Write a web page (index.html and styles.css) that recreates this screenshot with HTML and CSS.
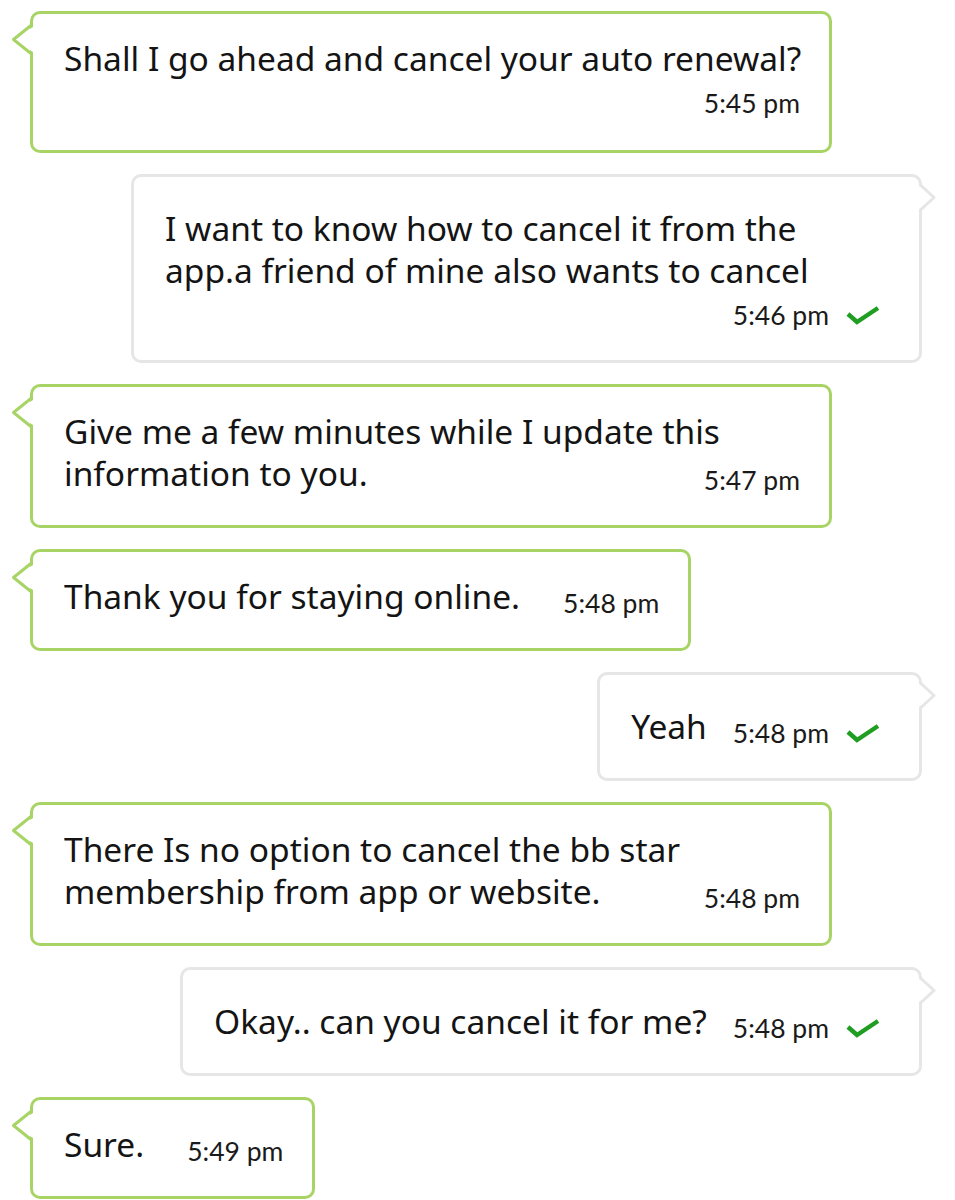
FILE: index.html
```html
<!DOCTYPE html>
<html>
<meta charset="utf-8">
<head>
  <link rel="stylesheet" href="styles.css">
</head>
<body>
  <div class="chat">
    <div class="msg in wide stack">
      <svg class="tail" width="24" height="34"><polygon points="25,2 2.5,16.5 25,31" /><polyline points="20.5,2 2.5,16.5 20.5,31" /></svg>
      <div class="body">Shall I go ahead and cancel your auto renewal?</div>
      <div class="meta"><span class="time">5:45 pm</span></div>
    </div>

    <div class="msg out wide stack">
      <svg class="tail" width="18" height="30"><polygon points="0,2 16,14.5 0,27" /><polyline points="2.5,2 16,14.5 2.5,27" /></svg>
      <div class="body">I want to know how to cancel it from the<br>app.a friend of mine also wants to cancel</div>
      <div class="meta">
        <span class="time">5:46 pm</span>
        <svg class="tick" width="34" height="20"><polyline points="2,9 11,17 32,3" /></svg>
      </div>
    </div>

    <div class="msg in wide">
      <svg class="tail" width="24" height="34"><polygon points="25,2 2.5,16.5 25,31" /><polyline points="20.5,2 2.5,16.5 20.5,31" /></svg>
      <div class="body">Give me a few minutes while I update this<br>information to you.</div>
      <div class="meta"><span class="time">5:47 pm</span></div>
    </div>

    <div class="msg in">
      <svg class="tail" width="24" height="34"><polygon points="25,2 2.5,16.5 25,31" /><polyline points="20.5,2 2.5,16.5 20.5,31" /></svg>
      <div class="body">Thank you for staying online.</div>
      <div class="meta"><span class="time">5:48 pm</span></div>
    </div>

    <div class="msg out">
      <svg class="tail" width="18" height="30"><polygon points="0,2 16,14.5 0,27" /><polyline points="2.5,2 16,14.5 2.5,27" /></svg>
      <div class="body">Yeah</div>
      <div class="meta">
        <span class="time">5:48 pm</span>
        <svg class="tick" width="34" height="20"><polyline points="2,9 11,17 32,3" /></svg>
      </div>
    </div>

    <div class="msg in wide">
      <svg class="tail" width="24" height="34"><polygon points="25,2 2.5,16.5 25,31" /><polyline points="20.5,2 2.5,16.5 20.5,31" /></svg>
      <div class="body">There Is no option to cancel the bb star<br>membership from app or website.</div>
      <div class="meta"><span class="time">5:48 pm</span></div>
    </div>

    <div class="msg out">
      <svg class="tail" width="18" height="30"><polygon points="0,2 16,14.5 0,27" /><polyline points="2.5,2 16,14.5 2.5,27" /></svg>
      <div class="body">Okay.. can you cancel it for me?</div>
      <div class="meta">
        <span class="time">5:48 pm</span>
        <svg class="tick" width="34" height="20"><polyline points="2,9 11,17 32,3" /></svg>
      </div>
    </div>

    <div class="msg in">
      <svg class="tail" width="24" height="34"><polygon points="25,2 2.5,16.5 25,31" /><polyline points="20.5,2 2.5,16.5 20.5,31" /></svg>
      <div class="body">Sure.</div>
      <div class="meta"><span class="time">5:49 pm</span></div>
    </div>
  </div>
</body>
</html>
```

FILE: styles.css
```css
body {
  margin: 0;
  padding: 0;
  background: #fff;
  font-family: "Noto Sans", "Open Sans", sans-serif;
  color: #141414;
}

.chat {
  display: flex;
  flex-direction: column;
  gap: 21px;
  padding: 11px 33px 0 30px;
}

.msg {
  position: relative;
  display: flex;
  align-items: flex-end;
  box-sizing: border-box;
  border: 3px solid;
  border-radius: 10px;
  background: #fff;
}

.msg.in {
  align-self: flex-start;
  border-color: #a8d466;
  padding: 23px 29px 31px 31px;
  column-gap: 43px;
}

.msg.in.stack {
  padding-bottom: 33px;
}

.msg.out {
  align-self: flex-end;
  border-color: #e6e6e6;
  padding: 30px 39px 31px 31px;
  column-gap: 26px;
}

.msg.in.wide {
  width: 802px;
}

.msg.out.wide {
  width: 791px;
}

.msg.stack {
  flex-direction: column;
  align-items: stretch;
}

.body {
  min-width: 0;
  font-size: 33.5px;
  line-height: 42px;
  white-space: nowrap;
}

.meta {
  display: flex;
  flex-shrink: 0;
  align-items: center;
  gap: 17px;
  margin-left: auto;
}

.stack .meta {
  padding-top: 10px;
}

.time {
  font-family: Lato, sans-serif;
  font-size: 26.5px;
  line-height: 28px;
  color: #1a1a1a;
  white-space: nowrap;
}

.tick polyline {
  fill: none;
  stroke: #1f9e22;
  stroke-width: 4.5;
}

.tail {
  position: absolute;
}

.tail polygon {
  fill: #fff;
}

.tail polyline {
  fill: none;
  stroke-width: 3;
  stroke-linejoin: round;
}

.in .tail {
  left: -22px;
  top: 9px;
}

.in .tail polyline {
  stroke: #a8d466;
}

.out .tail {
  right: -17px;
  top: 6px;
}

.out .tail polyline {
  stroke: #e6e6e6;
}
```
